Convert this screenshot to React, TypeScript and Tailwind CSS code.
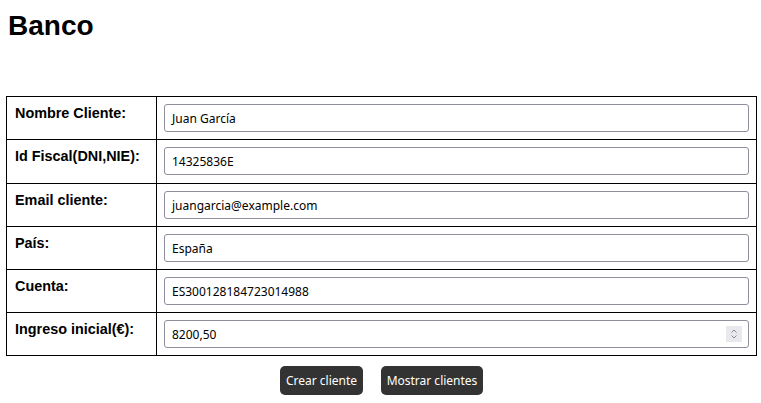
import React from "react";

const rows: { label: string; value: string; number?: boolean; tall?: boolean }[] = [
  { label: "Nombre Cliente:", value: "Juan García" },
  { label: "Id Fiscal(DNI,NIE):", value: "14325836E", tall: true },
  { label: "Email cliente:", value: "juangarcia@example.com" },
  { label: "País:", value: "España" },
  { label: "Cuenta:", value: "ES300128184723014988" },
  { label: "Ingreso inicial(€):", value: "8200,50", number: true },
];

const ui = { fontFamily: '"Noto Sans", "Open Sans", sans-serif' };

export default function App() {
  return (
    <div className="w-[761px] h-[403px] bg-white text-black overflow-hidden" style={{ fontFamily: '"Liberation Sans", Arial, sans-serif' }}>
      <h1 className="pl-[8px] pt-[10px] text-[28px] leading-[32px] font-bold">Banco</h1>
      <div className="px-[6px] pt-[54px]">
        <table className="w-[751px] border-collapse border border-black">
          <tbody>
            {rows.map((r) => (
              <tr key={r.label} className={r.tall ? "h-[44px]" : "h-[43px]"}>
                <td className="w-[150px] border border-black align-top pl-[8px] pt-[8px] text-[14.4px] leading-[17px] font-bold">
                  {r.label}
                </td>
                <td className="border border-black px-[7px] py-[7px] align-top">
                  <div
                    className="h-[28px] w-full border border-[#8f8f9d] rounded-[3px] flex items-center pl-[7px] pr-[6px] text-[12px] text-black"
                    style={ui}
                  >
                    <span className="flex-1 pt-[1px]">{r.value}</span>
                    {r.number && (
                      <span className="w-[16px] h-[16px] bg-[#e9e9ed] flex items-center justify-center">
                        <svg width="10" height="12" viewBox="0 0 10 12" fill="none" stroke="#8a8a96" strokeWidth="1">
                          <path d="M2.5 4.5 L5 2 L7.5 4.5" />
                          <path d="M2.5 7.5 L5 10 L7.5 7.5" />
                        </svg>
                      </span>
                    )}
                  </div>
                </td>
              </tr>
            ))}
          </tbody>
        </table>
      </div>
      <div className="flex justify-center gap-[18px] pt-[10px] pl-[2px]" style={ui}>
        <button className="h-[29px] w-[83px] rounded-[5px] bg-[#333333] text-white text-[12px]">Crear cliente</button>
        <button className="h-[29px] w-[102px] rounded-[5px] bg-[#333333] text-white text-[12px]">Mostrar clientes</button>
      </div>
    </div>
  );
}
